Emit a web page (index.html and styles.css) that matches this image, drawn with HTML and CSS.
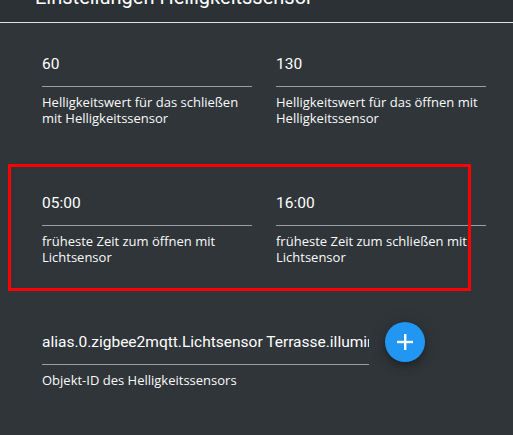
FILE: index.html
```html
<!DOCTYPE html>
<html lang="de">
<head>
  <meta charset="UTF-8" />
  <title>Einstellungen Helligkeitssensor</title>
  <link rel="stylesheet" href="styles.css">
</head>
<body>

<div class="dialog-title">
  <h2>Einstellungen Helligkeitssensor</h2>
</div>

<div class="settings">
  <div class="field-grid">
    <div class="field">
      <div class="field-value">60</div>
      <p class="field-help">Helligkeitswert für das schließen mit Helligkeitssensor</p>
    </div>
    <div class="field">
      <div class="field-value">130</div>
      <p class="field-help">Helligkeitswert für das öffnen mit Helligkeitssensor</p>
    </div>
    <div class="field">
      <div class="field-value">05:00</div>
      <p class="field-help">früheste Zeit zum öffnen mit Lichtsensor</p>
    </div>
    <div class="field">
      <div class="field-value">16:00</div>
      <p class="field-help">früheste Zeit zum schließen mit Lichtsensor</p>
    </div>
  </div>

  <div class="object-row">
    <div class="field object-field">
      <div class="field-value">alias.0.zigbee2mqtt.Lichtsensor Terrasse.illuminance</div>
      <p class="field-help">Objekt-ID des Helligkeitssensors</p>
    </div>
    <button class="fab" title="Objekt auswählen">
      <svg width="16" height="16" viewBox="0 0 16 16">
        <rect x="7" y="0" width="2.4" height="16" fill="#fff"/>
        <rect x="0" y="6.8" width="16" height="2.4" fill="#fff"/>
      </svg>
    </button>
  </div>
</div>

<!-- markierung -->
<div class="highlight"></div>

</body>
</html>
```

FILE: styles.css
```css
body {
  font-family: Roboto, "Noto Sans", sans-serif;
  margin: 0; padding: 0;
  background: #2f3539;
  color: #fff;
  height: 100vh;
  overflow: hidden;
  position: relative;
}

.dialog-title {
  background: #2b3135;
  border-bottom: 1px solid #e0e0e0;
  height: 22px;
  padding-left: 35px;
  overflow: hidden;
}

.dialog-title h2 {
  margin: -15px 0 0;
  font-size: 20px;
  font-weight: 400;
  line-height: 24px;
}

.settings {
  padding: 32px 27px 0 42px;
}

.field-grid {
  display: grid;
  grid-template-columns: 1fr 1fr;
  column-gap: 24px;
  row-gap: 68px;
}

.field-value {
  font-size: 15.5px;
  line-height: 19px;
  padding-bottom: 12px;
  border-bottom: 1px solid #9e9e9e;
  white-space: nowrap;
  overflow: hidden;
}

.field-help {
  margin: 7px 0 0;
  font-family: "Open Sans", "Noto Sans", sans-serif;
  font-size: 13px;
  font-weight: 500;
  line-height: 16px;
  color: #fafafa;
}

.object-row {
  display: flex;
  align-items: flex-start;
  gap: 16px;
  margin-top: 57px;
}

.object-field {
  width: 327px;
  padding-top: 11px;
}

.fab {
  width: 40px;
  height: 40px;
  border-radius: 50%;
  border: none;
  background: #2196f3;
  box-shadow: 0 3px 5px -1px rgba(0,0,0,0.2), 0 6px 10px 0 rgba(0,0,0,0.14), 0 1px 18px 0 rgba(0,0,0,0.12);
  display: flex;
  align-items: center;
  justify-content: center;
  padding: 0;
  cursor: pointer;
}

.highlight {
  position: absolute;
  left: 8px; top: 164px;
  width: 457px; height: 121px;
  border: 3px solid #ff0000;
}
```
